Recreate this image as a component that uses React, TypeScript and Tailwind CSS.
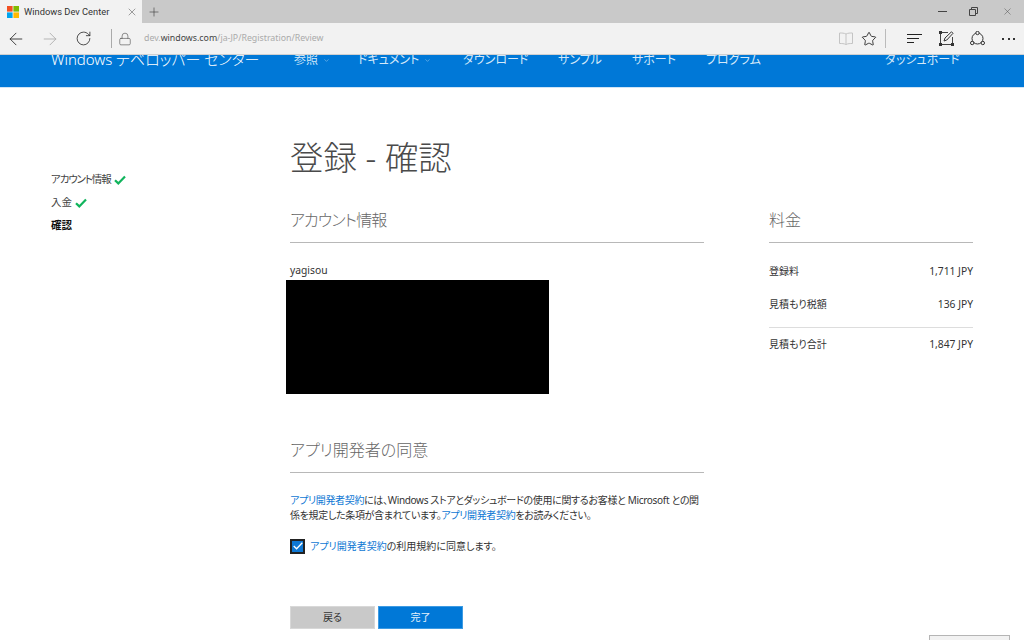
import { ArrowLeft, ArrowRight, ChevronDown, Lock, Plus, RotateCw, Star, X } from "lucide-react"

const font = "font-['Noto_Sans','Noto_Sans_CJK_JP',sans-serif] [font-feature-settings:'palt']"

const navItems = [
  { label: "参照", width: "w-[64px]", arrow: true },
  { label: "ドキュメント", width: "w-[105px]", arrow: true },
  { label: "ダウンロード", width: "w-[95px]", arrow: false },
  { label: "サンプル", width: "w-[74px]", arrow: false },
  { label: "サポート", width: "w-[74px]", arrow: false },
  { label: "プログラム", width: "w-[80px]", arrow: false },
]

function WinLogo() {
  return (
    <svg width="12" height="12" viewBox="0 0 12 12" className="shrink-0">
      <rect x="0" y="0" width="5.6" height="5.6" fill="#f25022" />
      <rect x="6.4" y="0" width="5.6" height="5.6" fill="#7fba00" />
      <rect x="0" y="6.4" width="5.6" height="5.6" fill="#00a4ef" />
      <rect x="6.4" y="6.4" width="5.6" height="5.6" fill="#ffb900" />
    </svg>
  )
}

function Check() {
  return (
    <svg width="12" height="10" viewBox="0 0 12 10" className="ml-[3px] shrink-0">
      <path d="M1 5.2 L4.3 8.4 L11 1.4" fill="none" stroke="#10b45c" strokeWidth="2.2" />
    </svg>
  )
}

function Link({ children }: { children: string }) {
  return <a className="text-[#0f78d4]">{children}</a>
}

function Heading({ children, className = "" }: { children: string; className?: string }) {
  return (
    <h2 className={`border-b border-[#b8b8b8] pb-[10px] text-[16px] leading-[24px] font-light text-[#666] ${className}`}>
      {children}
    </h2>
  )
}

function FeeRow({ label, value, className }: { label: string; value: string; className: string }) {
  return (
    <div className={`flex justify-between text-[10.3px] leading-[16px] text-[#333] ${className}`}>
      <span className="text-[10px]">{label}</span>
      <span>{value}</span>
    </div>
  )
}

export default function App() {
  return (
    <div className={`relative flex h-[640px] w-[1024px] flex-col overflow-hidden bg-white ${font}`}>
      {/* Browser tabs */}
      <div className="flex h-[23px] shrink-0 items-center bg-[#c9c9c9] text-[#333]">
        <div className="flex h-full w-[142px] items-center bg-[#f2f2f2] pl-[7px]">
          <WinLogo />
          <span className="ml-[5px] w-[102px] font-['Roboto',sans-serif] text-[9.3px] whitespace-nowrap">Windows Dev Center</span>
          <X size={12} strokeWidth={1} className="text-[#444]" />
        </div>
        <Plus size={14} strokeWidth={1} className="ml-[5px]" />
        <div className="ml-auto flex items-center text-[#444]">
          <svg width="9" height="9" viewBox="0 0 9 9" className="mr-[22px]">
            <path d="M0 4.5H9" stroke="currentColor" />
          </svg>
          <svg width="9" height="9" viewBox="0 0 9 9" className="mr-[24px]">
            <path d="M0.5 2.5H6.5V8.5H0.5Z M2.5 2.5V0.5H8.5V6.5H6.5" fill="none" stroke="currentColor" />
          </svg>
          <X size={11} strokeWidth={1} className="mr-[11px]" />
        </div>
      </div>

      {/* Browser toolbar */}
      <div className="flex h-[32px] shrink-0 items-center border-b border-[#d0d0d0] bg-[#f2f2f2] text-[#222]">
        <ArrowLeft size={20} strokeWidth={1} className="ml-[6px]" />
        <ArrowRight size={20} strokeWidth={1} className="ml-[14px] text-[#aaa]" />
        <RotateCw size={17} strokeWidth={1.1} className="ml-[15px]" />
        <div className="ml-[19px] h-[19px] w-px bg-[#aaa]" />
        <Lock size={14} strokeWidth={1.1} className="ml-[6px] text-[#555]" />
        <div className="ml-[12px] text-[8.8px] text-[#aaa]">
          dev.<span className="text-[#444]">windows.com</span>/ja-JP/Registration/Review
        </div>
        <div className="ml-auto flex items-center">
          <svg width="14" height="13" viewBox="0 0 14 13" className="text-[#c4c4c4]">
            <path d="M7 2 C5 1 3 1 .5 1 V11.5 C3 11.5 5 11.5 7 12.5 C9 11.5 11 11.5 13.5 11.5 V1 C11 1 9 1 7 2 V12.5" fill="none" stroke="currentColor" />
          </svg>
          <Star size={16} strokeWidth={1.3} className="ml-[8px]" />
          <div className="ml-[8px] h-[19px] w-px bg-[#bbb]" />
          <svg width="15" height="11" viewBox="0 0 15 11" className="ml-[21px]">
            <path d="M0 1.5H15 M0 5.5H12 M0 9.5H7" stroke="#222" />
          </svg>
          <svg width="15" height="15" viewBox="0 0 15 15" className="ml-[17px]">
            <path d="M1.5 1.5H9 M1.5 1.5V13.5H13.5V6" fill="none" stroke="#444" />
            <path d="M5 10 L6 7 L12.5 .8 L14 2.3 L7.8 9 Z" fill="none" stroke="#333" />
            <rect x="0" y="0" width="3" height="3" fill="#333" />
            <rect x="0" y="12" width="3" height="3" fill="#333" />
            <rect x="12" y="12" width="3" height="3" fill="#333" />
          </svg>
          <svg width="15" height="15" viewBox="0 0 15 15" className="ml-[16px]">
            <circle cx="7.5" cy="7.5" r="5.5" fill="none" stroke="#333" />
            <circle cx="7.5" cy="2" r="1.7" fill="#f2f2f2" stroke="#333" />
            <circle cx="2.2" cy="12" r="1.7" fill="#f2f2f2" stroke="#333" />
            <circle cx="12.8" cy="12" r="1.7" fill="#f2f2f2" stroke="#333" />
          </svg>
          <div className="mr-[9px] ml-[17px] flex gap-[3.5px]">
            <span className="h-[2px] w-[2px] bg-[#333]" />
            <span className="h-[2px] w-[2px] bg-[#333]" />
            <span className="h-[2px] w-[2px] bg-[#333]" />
          </div>
        </div>
      </div>

      {/* Site nav, scrolled so the text is cut by the toolbar */}
      <div className="flex h-[33px] shrink-0 items-start overflow-hidden border-b border-[#cfe4f6] bg-[#0078d7] pl-[51px] text-white">
        <div className="-mt-[5px] flex w-[243px] items-center text-[15px] leading-[18px] font-light tracking-[-0.06px]">
          Windows デベロッパー センター
        </div>
        <div className="-mt-[3px] flex text-[12px] leading-[16px] text-[#d5e9f9]">
          {navItems.map((item) => (
            <div key={item.label} className={`flex items-center ${item.width}`}>
              {item.label}
              {item.arrow && <ChevronDown size={7} className="ml-[5px] text-[#8fc4ec]" />}
            </div>
          ))}
        </div>
        <div className="-mt-[3px] ml-[99px] text-[12px] leading-[16px] text-[#d5e9f9]">ダッシュボード</div>
      </div>

      {/* Page body */}
      <div className="flex flex-1">
        <nav className="w-[290px] shrink-0 pt-[80px] pl-[51px] text-[10.5px] leading-[23px] text-[#444]">
          <div className="flex items-center"><span className="tracking-[-1.1px]">アカウント情報</span><Check /></div>
          <div className="flex items-center">入金<Check /></div>
          <div className="font-bold text-[#111]">確認</div>
        </nav>

        <main className="w-[414px] shrink-0">
          <h1 className="mt-[46px] text-[33.4px] leading-[46px] font-light text-[#4a4a4a]">登録 - 確認</h1>
          <div className="mt-[28px]">
            <Heading className="tracking-[-0.9px]">アカウント情報</Heading>
          </div>
          <div className="mt-[18px] text-[10.3px] leading-[19px] text-[#333]">yagisou</div>
          <div className="-ml-[4px] h-[114px] w-[263px] bg-black" />

          <div className="mt-[44px]">
            <Heading>アプリ開発者の同意</Heading>
          </div>
          <p className="mt-[20px] text-[10px] leading-[15px] tracking-[-0.33px] whitespace-nowrap text-[#333]">
            <Link>アプリ開発者契約</Link>には、Windows ストアとダッシュボードの使用に関するお客様と Microsoft との関<br />係を規定した条項が含まれています。<Link>アプリ開発者契約</Link>をお読みください。
          </p>
          <label className="mt-[15px] flex items-center text-[10px] leading-[16px] text-[#333]">
            <span className="flex h-[15px] w-[15px] items-center justify-center border-2 border-[#222] bg-[#0f78d4]">
              <svg width="10" height="8" viewBox="0 0 10 8">
                <path d="M.7 4 L3.6 6.8 L9.3 .8" fill="none" stroke="#fff" strokeWidth="1.3" />
              </svg>
            </span>
            <span className="ml-[5px]"><Link>アプリ開発者契約</Link>の利用規約に同意します。</span>
          </label>
          <div className="mt-[52px] flex gap-[3px] text-[10px]">
            <button className="h-[23px] w-[85px] border border-[#d8d8d8] bg-[#c9c9c9] text-[#333]">戻る</button>
            <button className="h-[23px] w-[85px] border border-[#3d9be3] bg-[#0078d7] text-[#e4f1fb]">完了</button>
          </div>
        </main>

        <aside className="ml-[65px] w-[204px] shrink-0 pt-[120px]">
          <Heading>料金</Heading>
          <FeeRow label="登録料" value="1,711 JPY" className="mt-[20px]" />
          <FeeRow label="見積もり税額" value="136 JPY" className="mt-[17px]" />
          <div className="mt-[15px] h-px bg-[#ddd]" />
          <FeeRow label="見積もり合計" value="1,847 JPY" className="mt-[8px]" />
        </aside>
      </div>

      {/* Floating feedback button, only its top edge is on screen */}
      <div className="absolute top-[635px] left-[929px] h-[20px] w-[81px] border border-[#b5b5b5] bg-[#f2f2f2]" />
    </div>
  )
}
